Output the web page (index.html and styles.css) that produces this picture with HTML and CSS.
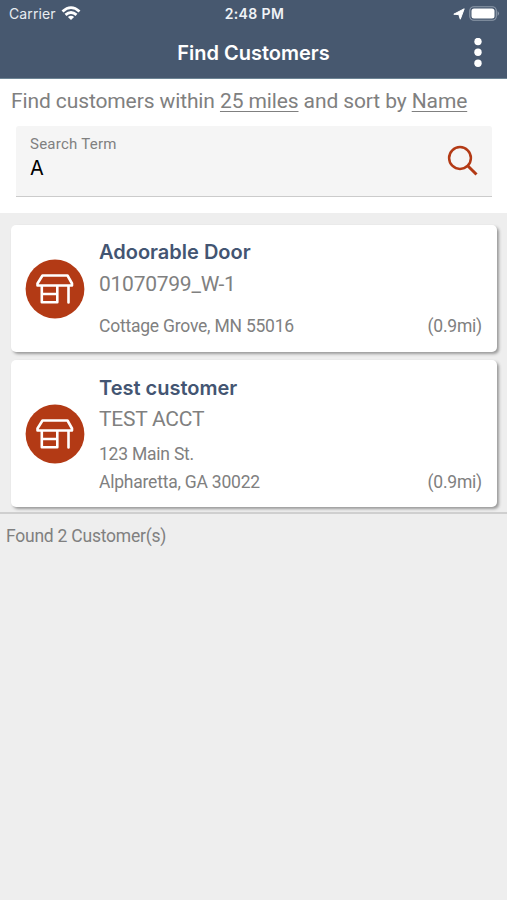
FILE: index.html
```html
<!DOCTYPE html>
<html lang="en">
<head>
<meta charset="utf-8">
<title>Find Customers</title>
<link rel="stylesheet" href="styles.css">
</head>
<body>
<svg class="defs" width="0" height="0" aria-hidden="true">
  <symbol id="store" viewBox="0 0 60 60">
    <circle cx="30" cy="30" r="29.4" fill="#b33a15"/>
    <path d="M17.500 16.500H42.500L47 24.500V26.500H12.500V24.500ZM16.800 27V43.300H32.300V27M16.800 35H32.300M43.500 27V43.500" fill="none" stroke="#fff" stroke-width="2.600" stroke-linecap="round" stroke-linejoin="round"/>
  </symbol>
</svg>
<header class="header">
  <div class="status">
    <div class="carrier"><span>Carrier</span>
      <svg width="20" height="15" viewBox="0 0 20 15" fill="none" stroke="#fff" stroke-width="2.800"><path d="M1.500 5.500Q10-2.300 18.500 5.500M4.500 8.900Q10 4 15.500 8.900"/><path d="M6.900 11.100Q10 8.500 13.100 11.100L10 14.100Z" fill="#fff" stroke="none"/></svg>
    </div>
    <div class="time">2:48 PM</div>
    <div class="indicators">
      <svg width="12" height="12" viewBox="0 0 12 12"><path d="M11.200.8L7.300 11.200 5.800 6.600.8 6.200Z" fill="#fff" stroke="#fff" stroke-linejoin="round"/></svg>
      <svg width="31" height="15" viewBox="0 0 31 15"><rect x=".8" y=".8" width="26.500" height="13.400" rx="4" fill="none" stroke="#8e9aab" stroke-width="1.100"/><rect x="2.500" y="2.500" width="23" height="10" rx="2.500" fill="#fff"/><path d="M28.600 5Q31.400 7.500 28.600 10Z" fill="#8e9aab"/></svg>
    </div>
  </div>
  <div class="titlebar">
    <h1 class="title">Find Customers</h1>
    <svg class="more" width="8" height="30" viewBox="0 0 8 30" fill="#fff"><circle cx="4" cy="3.500" r="3.700"/><circle cx="4" cy="14.300" r="3.700"/><circle cx="4" cy="25.200" r="3.700"/></svg>
  </div>
</header>
<section class="search">
  <p class="filter">Find customers within <u>25 miles</u> and sort by <u>Name</u></p>
  <div class="field">
    <div><div class="label">Search Term</div><div class="value">A</div></div>
    <svg width="32" height="32" viewBox="0 0 32 32" fill="none" stroke="#b33a15" stroke-width="2.500"><circle cx="13" cy="13" r="10.900"/><path d="M20.700 20.700L29.500 29.500" stroke-width="3"/></svg>
  </div>
</section>
<main class="list">
  <article class="card first">
    <svg class="icon" width="60" height="60"><use href="#store"/></svg>
    <div class="info">
      <h2 class="name">Adoorable Door</h2>
      <div class="account">01070799_W-1</div>
      <div class="row"><span>Cottage Grove, MN 55016</span><span>(0.9mi)</span></div>
    </div>
  </article>
  <article class="card second">
    <svg class="icon" width="60" height="60"><use href="#store"/></svg>
    <div class="info">
      <h2 class="name">Test customer</h2>
      <div class="account">TEST ACCT</div>
      <div class="row street"><span>123 Main St.</span></div>
      <div class="row"><span>Alpharetta, GA 30022</span><span>(0.9mi)</span></div>
    </div>
  </article>
</main>
<footer class="found">Found 2 Customer(s)</footer>
</body>
</html>
```
FILE: styles.css
```css
* { box-sizing: border-box; }
body { margin: 0; min-height: 900px; background: #eee; font-family: Roboto, sans-serif; color: #808080; }
.defs { display: block; }
h1, h2, p { margin: 0; }
.header { height: 79px; background: #47586f; color: #fff; font-family: Inter, sans-serif; border-bottom: 1px solid #6d8494; }
.status { display: grid; grid-template-columns: 1fr auto 1fr; height: 27px; padding: 0 7px 0 9px; align-items: center; }
.carrier { display: flex; align-items: center; gap: 5px; color: #e8ecf1; font-size: 14px; letter-spacing: .1px; }
.time { font-size: 14px; font-weight: 600; color: #f0f3f7; letter-spacing: .4px; }
.indicators { display: flex; align-items: center; justify-content: flex-end; gap: 4px; }
.titlebar { display: grid; grid-template-columns: 1fr auto 1fr; align-items: center; height: 51px; padding-right: 25px; padding-left: 25px; }
.title { grid-column: 2; font-size: 20px; font-weight: 600; line-height: 28px; }
.more { justify-self: end; }
.search { height: 134px; background: #fff; }
.filter { padding: 8px 0 0 11px; height: 47px; font-size: 21px; letter-spacing: -.11px; line-height: 28px; white-space: nowrap; }
u { text-decoration-thickness: 1px; text-underline-offset: 3px; }
.field { display: flex; justify-content: space-between; height: 71px; margin: 0 15px 0 16px; padding: 8px 13px 0 14px; background: #f5f5f5; border-bottom: 1px solid #cbcbcb; border-radius: 3px 3px 0 0; }
.field svg { margin-top: 11px; }
.label { font-size: 15px; line-height: 20px; letter-spacing: .25px; }
.value { font: 20px/28px Inter, sans-serif; color: #000; }
.list { display: grid; gap: 9px; padding: 12px 10px 5px 11px; border-bottom: 2px solid #cfcfcf; }
.card { display: flex; align-items: center; background: #fff; border-radius: 5px; box-shadow: 2px 2px 3px #999; padding: 0 15px 0 14px; }
.first { height: 127px; margin-bottom: -1px; }
.second { height: 147px; }
.icon { flex: none; margin-right: 14px; }
.info { flex: 1; align-self: flex-start; padding-top: 13px; }
.second .info { padding-top: 14px; }
.name { color: #435572; font: 600 20px/28px Inter, sans-serif; }
.account { font-size: 21px; line-height: 35px; letter-spacing: -.25px; padding-top: 1px; }
.second .account { padding: 0 0 1px; }
.row { display: flex; justify-content: space-between; font-size: 17.500px; letter-spacing: -.22px; line-height: 28px; }
.first .row { margin-top: 10px; }
.street { margin-top: 2px; }
.found { padding: 8px 6px; font-size: 17.500px; letter-spacing: -.23px; line-height: 28px; }
```
